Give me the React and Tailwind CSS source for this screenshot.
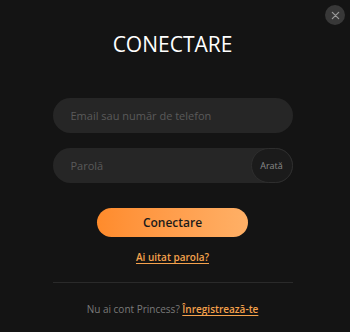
import React, { useState } from 'react';

export default function App() {
    const [show, setShow] = useState(false);

    return (
        <div className="relative w-[350px] h-[332px] bg-[#141414] overflow-hidden" style={{ fontFamily: '"Open Sans", "Noto Sans", sans-serif' }}>
            {/* ปุ่มปิด */}
            <button className="absolute top-[5px] left-[325px] w-5 h-5 rounded-full bg-[#383838] flex items-center justify-center">
                <svg width="9" height="9" viewBox="0 0 10 10" stroke="#9a9a9a" strokeWidth="1.4" strokeLinecap="round">
                    <path d="M1.5 1.5l7 7M8.5 1.5l-7 7" />
                </svg>
            </button>

            <div className="flex flex-col items-center pt-[30px] pr-[5px]">
                <h1 className="text-[21px] leading-7 font-medium text-white">CONECTARE</h1>

                <form className="w-[240px] mt-[40px] flex flex-col gap-[15px]" onSubmit={(e) => e.preventDefault()}>
                    <input
                        type="text"
                        placeholder="Email sau număr de telefon"
                        className="h-[35px] w-full rounded-full bg-[#262626] px-[18px] text-[11px] text-white placeholder-[#5a5a5a] outline-none"
                    />
                    <div className="h-[35px] w-full rounded-full bg-[#262626] flex items-center">
                        <input
                            type={show ? 'text' : 'password'}
                            placeholder="Parolă"
                            className="flex-1 min-w-0 h-full bg-transparent pl-[18px] text-[11px] text-white placeholder-[#5a5a5a] outline-none"
                        />
                        <button
                            type="button"
                            onClick={() => setShow(!show)}
                            className="h-[35px] w-[42px] rounded-full bg-[#1b1b1b] border border-[#2e2e2e] text-[9px] text-[#8a8a8a]"
                        >
                            Arată
                        </button>
                    </div>

                    <button
                        type="submit"
                        className="mt-[10px] self-center w-[151px] h-[29px] rounded-full bg-gradient-to-r from-[#ff8b2b] to-[#ffb066] text-[12px] font-semibold text-[#1a1a1a]"
                    >
                        Conectare
                    </button>
                </form>

                <a href="#" className="mt-[13px] text-[10px] font-semibold text-[#f5a24c] underline underline-offset-2">Ai uitat parola?</a>

                <div className="w-[240px] h-px bg-[#2a2a2a] mt-[17px]" />

                <p className="mt-[19px] text-[10px] text-[#7a7a7a]">
                    Nu ai cont Princess?{' '}
                    <a href="#" className="font-semibold text-[#f5a24c] underline underline-offset-2">Înregistrează-te</a>
                </p>
            </div>
        </div>
    );
}
